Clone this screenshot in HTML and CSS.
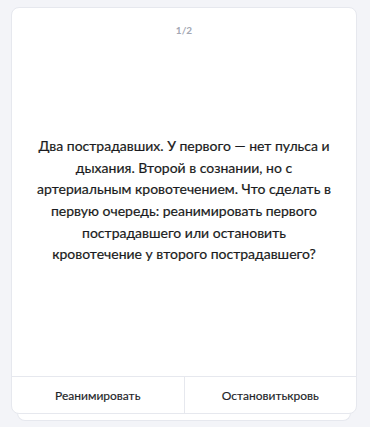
FILE: index.html
```html
<!DOCTYPE html>
<html lang="ru">
<head>
  <meta charset="UTF-8">
  <meta name="viewport" content="width=device-width, initial-scale=1.0">
  <title>Вопрос 1/2</title>
  <link rel="stylesheet" href="styles.css">
</head>
<body>

  <div class="stack">
    <div class="card">
      <div class="counter">1/2</div>
      <div class="question">
        <p>Два пострадавших. У первого — нет пульса и<br>дыхания. Второй в сознании, но с<br>артериальным кровотечением. Что сделать в<br>первую очередь: реанимировать первого<br>пострадавшего или остановить<br>кровотечение у второго пострадавшего?</p>
      </div>
      <div class="answers">
        <button class="answer">Реанимировать</button>
        <button class="answer">Остановитькровь</button>
      </div>
    </div>
    <div class="card-back"></div>
  </div>

</body>
</html>
```

FILE: styles.css
```css
body {
  margin: 0;
  padding: 0;
  background-color: #f3f4f8;
  font-family: Lato, "Noto Sans", sans-serif;
}

.stack {
  padding: 7px 13px 0 11px;
}

.card {
  display: flex;
  flex-direction: column;
  height: 407px;
  background: white;
  border: 1px solid #e6e8ee;
  border-radius: 8px;
  box-sizing: border-box;
  position: relative;
  z-index: 1;
}

.card-back {
  height: 7px;
  margin: -1px 6px 0;
  background: white;
  border: 1px solid #e6e8ee;
  border-top: none;
  border-radius: 0 0 8px 8px;
}

.counter {
  text-align: center;
  padding-top: 16px;
  font-size: 10px;
  font-weight: bold;
  color: #a3a7b3;
}

.question {
  flex: 1;
  display: flex;
  align-items: center;
  justify-content: center;
  padding: 0 16px 12px;
}

.question p {
  margin: 0;
  text-align: center;
  font-size: 14px;
  line-height: 21.6px;
  color: #1a1b20;
  -webkit-text-stroke: 0.2px #1a1b20;
}

.answers {
  display: flex;
  border-top: 1px solid #e6e8ee;
  height: 36px;
}

.answer {
  flex: 1;
  border: none;
  background: none;
  font-family: inherit;
  font-size: 12px;
  color: #222328;
  -webkit-text-stroke: 0.15px #222328;
  padding: 0;
  cursor: pointer;
}

.answer + .answer {
  border-left: 1px solid #e6e8ee;
}
```
